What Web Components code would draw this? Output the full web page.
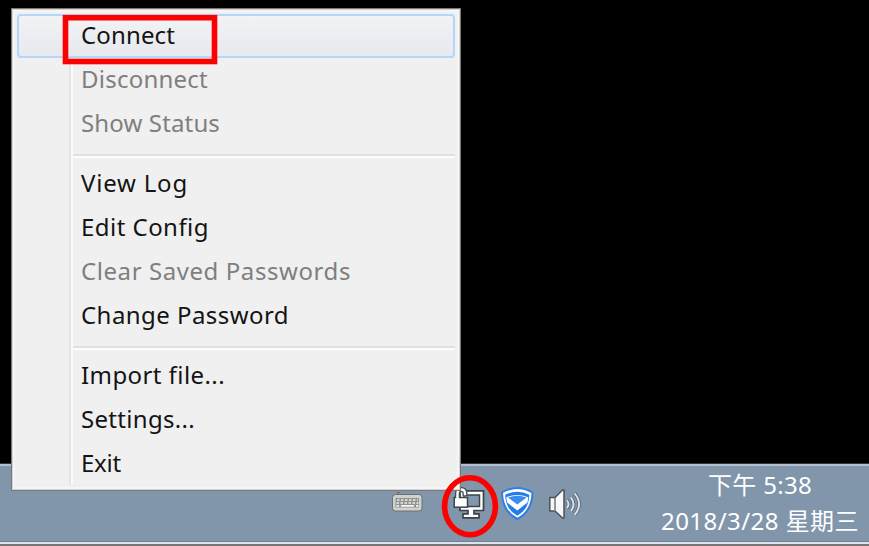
<!DOCTYPE html>
<html lang="zh-CN">
<head>
<meta charset="utf-8">
<title>Tray menu</title>
<style>
html,body{margin:0;height:100%;background:#000;overflow:hidden}
</style>
</head>
<body>
<desktop-screen>
  <context-menu slot="menu">
    <menu-entry active fit="94">Connect</menu-entry>
    <menu-entry disabled fit="127">Disconnect</menu-entry>
    <menu-entry disabled fit="139">Show Status</menu-entry>
    <menu-divider></menu-divider>
    <menu-entry fit="107">View Log</menu-entry>
    <menu-entry fit="128">Edit Config</menu-entry>
    <menu-entry disabled fit="270">Clear Saved Passwords</menu-entry>
    <menu-entry fit="208">Change Password</menu-entry>
    <menu-divider></menu-divider>
    <menu-entry fit="144">Import file...</menu-entry>
    <menu-entry fit="114">Settings...</menu-entry>
    <menu-entry fit="40">Exit</menu-entry>
  </context-menu>
  <task-bar slot="bar">
    <tray-icon name="keyboard"></tray-icon>
    <tray-icon name="network"></tray-icon>
    <tray-icon name="shield"></tray-icon>
    <tray-icon name="speaker"></tray-icon>
    <tray-clock slot="clock"><fit-text slot="time" width="104">下午 5:38</fit-text><fit-text slot="date" width="198">2018/3/28 星期三</fit-text></tray-clock>
  </task-bar>
  <red-marks slot="marks"></red-marks>
</desktop-screen>
<script>
const define = (name, html, setup) => customElements.define(name, class extends HTMLElement {
  connectedCallback() {
    if (this.shadowRoot) return;
    this.attachShadow({mode: 'open'}).innerHTML = html;
    if (setup) setup(this, this.shadowRoot);
  }
});

// Tracks a run of text so that it takes up the given width.
const track = (span, text, width) => {
  span.style.letterSpacing = '0px';
  const natural = span.getBoundingClientRect().width;
  if (width && natural) span.style.letterSpacing = (width - natural) / [...text].length + 'px';
};

define('desktop-screen', `<style>
:host{display:flex;flex-direction:column;justify-content:flex-end;position:relative;width:869px;height:546px;background:#000;overflow:hidden}
::slotted([slot=menu]){position:absolute;left:11px;top:8px;z-index:1}
::slotted([slot=marks]){position:absolute;inset:0;z-index:3}
</style><slot name="bar"></slot><slot name="menu"></slot><slot name="marks"></slot>`);

define('context-menu', `<style>
:host{display:block;box-sizing:border-box;width:450px;height:483px;border:1px solid #7d7b7a;padding:5px 5px 0;
background:linear-gradient(90deg,transparent 57px,#e6e6e6 57px,#e2e3e3 59px,#fbfbfb 59px,#fbfbfb 61px,transparent 61px) 0 4px/100% 472px no-repeat,#f0f0f0;
box-shadow:inset 0 0 0 1px #d4d3d2,inset 0 0 0 3px #f5f5f5}
</style><slot></slot>`);

define('menu-entry', `<style>
:host{display:flex;align-items:center;box-sizing:border-box;height:44px;padding:0 0 3px 64px;border-radius:4px;
font:24px/44px "Noto Sans","Open Sans",sans-serif;color:#141414;white-space:pre}
:host([active]){background:linear-gradient(#f3f3f4,#ebedf1 55%,#e7e9ef);box-shadow:inset 0 0 0 2px #b5d6fb}
:host([disabled]){color:#7f7f7f}
</style><span><slot></slot></span>`, (el, root) =>
  track(root.querySelector('span'), el.textContent, +el.getAttribute('fit')));

define('menu-divider', `<style>
:host{display:flex;align-items:center;height:16px;padding-left:56px}
i{flex:1;height:2px;background:#e1e1e1;border-bottom:2px solid #fcfcfc;margin-top:3px}
</style><i></i>`);

define('task-bar', `<style>
:host{display:flex;justify-content:space-between;box-sizing:border-box;width:869px;height:83px;background:#8195ab;
border-top:1px solid #31363c;border-bottom:2px solid #7b7674;box-shadow:inset 0 2px #b0c0d0,inset 0 -2px #dce3ea,inset 0 -3px #6f8094}
nav{display:grid;grid-template-columns:48px 52px 45px 40px;padding:20px 0 0 390px;height:40px}
</style><nav><slot></slot></nav><slot name="clock"></slot>`);

const icons = {
keyboard: `<rect x="2.5" y="10.5" width="29.5" height="16.5" rx="3" fill="#d1d1ce" stroke="#6c7073"/><path d="M7 10V8.5h3" fill="none" stroke="#6c7073"/><rect x="5.5" y="14" width="23.5" height="9.5" fill="#92928f"/><path d="M7 16h21M6.5 19h22" stroke="#eeeeeb" stroke-width="1.7" stroke-dasharray="2.5 1.5"/><path d="M6.5 21.9h2.5M11 21.9h13M26 21.9h2.5" stroke="#f4f4f1" stroke-width="1.7"/>`,
network: `<path d="M22 6.8h23.5v19.7h-9.5v3.3h5v4H25v-4h5v-3.3h-8z" fill="#fff" stroke="#3b4349" stroke-width="1.7"/><rect x="26" y="11" width="15.5" height="11.5" fill="#8297ad" stroke="#3d454c" stroke-width="1.5"/><path d="M19.5 14.5V9q0-3.5 3.7-3.5T27 9.5V12" fill="none" stroke="#43494d" stroke-width="5"/><path d="M19.5 15V9q0-3.5 3.7-3.5T27 9.5V11.3" fill="none" stroke="#fff" stroke-width="2.4"/><rect x="16.2" y="13.5" width="13.3" height="9.7" fill="#fff" stroke="#3b4349" stroke-width="1.5"/><path d="M18.3 15h2.4v-3h-2.4z" fill="#fff"/>`,
shield: `<path d="M12 8.5Q27-.5 42.5 8.5Q42 27.500 27.3 35Q12.500 27.500 12 8.500z" fill="#fff" stroke="#2c7fe8" stroke-width="2"/><path d="M15.200 10.800Q27.300 4.500 39.300 10.800Q39 25.500 27.300 31.700Q15.500 25.500 15.200 10.800z" fill="#247ce8"/><path d="M16.300 13.300Q27 8.500 38.300 13.300L37.500 18.500L27.300 26.500L17 18.500z" fill="#fff"/><path d="M18 13.600Q27.300 10 36.600 13.600L27.300 20.500z" fill="#3a8cee"/>`,
speaker: `<path d="M14.800 13.500h5.200l7.500-7.500h1.500v28H27.500L20 27h-5.200z" fill="#f7f7f7" stroke="#4a525a" stroke-width="1.5" stroke-linejoin="round"/><path d="M20 14v12.500" stroke="#858b91" stroke-width="1.8"/><g fill="none" stroke="#596877" stroke-width="3.6"><path d="M32 16.500q3 3.700 0 7.400M35.800 13.300q5.500 6.900 0 13.800M39.600 9.500q9 10.700 0 21.400"/></g><g fill="none" stroke="#dde4ea" stroke-width="1.9"><path d="M32 16.500q3 3.700 0 7.400M35.800 13.300q5.500 6.900 0 13.800M39.600 9.500q9 10.700 0 21.400"/></g>`
};
define('tray-icon', `<style>:host{display:block;height:40px}svg{display:block;overflow:visible}</style>`, (el, root) => {
  root.innerHTML += `<svg width="48" height="40">${icons[el.getAttribute('name')]}</svg>`;
});

define('tray-clock', `<style>
:host{display:flex;flex-direction:column;align-items:center;width:218px;padding-top:3px;box-sizing:border-box;
font:24px/36px "Noto Sans","Noto Sans CJK SC",sans-serif;color:#fff;white-space:pre}
</style><slot name="time"></slot><slot name="date"></slot>`);
define('fit-text', `<style>:host{display:block;height:36px}</style><span><slot></slot></span>`, (el, root) =>
  track(root.querySelector('span'), el.textContent, +el.getAttribute('width')));

define('red-marks', `<style>:host{display:block;pointer-events:none}svg{display:block}</style>
<svg width="869" height="546" fill="none" stroke="#fe0000"><rect x="65.500" y="17.700" width="149" height="43.800" stroke-width="5.600"/><ellipse cx="470" cy="506.200" rx="25.400" ry="28.500" stroke-width="5.600"/></svg>`);
</script>
</body>
</html>
